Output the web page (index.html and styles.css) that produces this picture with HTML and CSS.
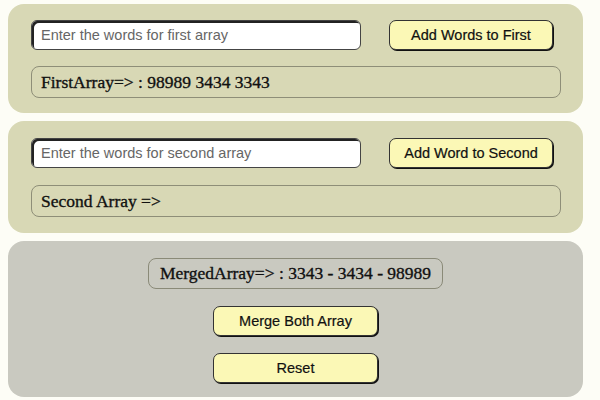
FILE: index.html
```html
<!DOCTYPE html>
<html>
<head>
<meta charset="utf-8">
<link rel="stylesheet" href="styles.css">
</head>
<body>
<div class="page">
  <section class="panel panel-a">
    <div class="row">
      <input class="field" type="text" placeholder="Enter the words for first array">
      <button class="btn btn-add">Add Words to First</button>
    </div>
    <div class="out">FirstArray=&gt; : 98989 3434 3343</div>
  </section>
  <section class="panel panel-b">
    <div class="row">
      <input class="field" type="text" placeholder="Enter the words for second array">
      <button class="btn btn-add">Add Word to Second</button>
    </div>
    <div class="out">Second Array =&gt;</div>
  </section>
  <section class="panel panel-c">
    <div class="merged">MergedArray=&gt; : 3343 - 3434 - 98989</div>
    <button class="btn btn-center">Merge Both Array</button>
    <button class="btn btn-center">Reset</button>
  </section>
</div>
</body>
</html>
```
FILE: styles.css
```css
html, body {
  margin: 0;
  padding: 0;
  background: #fdfdf6;
}
.page {
  padding: 4px 0 0 8px;
  width: 575px;
  display: flex;
  flex-direction: column;
  gap: 8px;
}
.panel {
  border-radius: 16px;
  box-sizing: border-box;
}
.panel-a, .panel-b {
  background: #d8d8b5;
  padding: 16px 22px 15px 23px;
  display: flex;
  flex-direction: column;
  gap: 16px;
}
.panel-b {
  padding-top: 17px;
  gap: 17px;
  padding-bottom: 16px;
}
.panel-c {
  background: #c9c9c0;
  padding: 17px 0 14px;
  display: flex;
  flex-direction: column;
  align-items: center;
  gap: 17px;
}
.row {
  display: flex;
  align-items: center;
  gap: 28px;
}
.field {
  width: 330px;
  height: 30px;
  box-sizing: border-box;
  border: 1px solid #444;
  border-radius: 6px;
  box-shadow: inset 2px 2px 0 #222;
  background: #ffffff;
  padding: 0 9px;
  font-family: "Liberation Sans", Arial, sans-serif;
  font-size: 14.5px;
  color: #222;
  outline: none;
}
.field::placeholder {
  color: #666;
}
.btn {
  height: 30px;
  box-sizing: border-box;
  background: #fbf8b6;
  border: 1px solid #333;
  border-radius: 7px;
  box-shadow: 1px 1px 0 #111;
  font-family: "Liberation Sans", Arial, sans-serif;
  font-size: 14.5px;
  -webkit-text-stroke: 0.2px #111;
  color: #111;
  padding: 0;
}
.btn-add {
  width: 164px;
}
.btn-center {
  width: 165px;
}
.out {
  height: 32px;
  box-sizing: border-box;
  border: 1px solid #8e8e78;
  border-radius: 8px;
  padding: 0 9px;
  display: flex;
  align-items: center;
  font-family: "Liberation Serif", "Times New Roman", serif;
  font-size: 17.5px;
  -webkit-text-stroke: 0.35px #111;
  color: #111;
}
.merged {
  height: 31px;
  width: 295px;
  box-sizing: border-box;
  border: 1px solid #8a8a78;
  border-radius: 8px;
  display: flex;
  align-items: center;
  justify-content: center;
  font-family: "Liberation Serif", "Times New Roman", serif;
  font-size: 17.5px;
  -webkit-text-stroke: 0.35px #111;
  color: #111;
}
```
